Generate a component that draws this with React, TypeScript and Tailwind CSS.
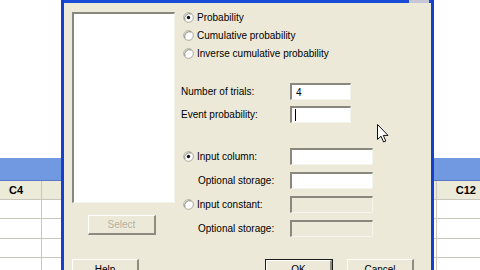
import React from 'react'

function Radio({ checked = false }: { checked?: boolean }) {
  return (
    <svg width="11" height="11" viewBox="0 0 11 11" className="shrink-0">
      <circle cx="5.5" cy="5.5" r="4.8" fill="#ffffff" stroke="#a9a798" strokeWidth="1" />
      <path d="M2 8.2 A4.8 4.8 0 0 1 8.2 2" fill="none" stroke="#8d8b7f" strokeWidth="1" />
      {checked && <circle cx="5.5" cy="5.5" r="1.7" fill="#111111" />}
    </svg>
  )
}

function Field({ wide = false, disabled = false, children }: { wide?: boolean; disabled?: boolean; children?: React.ReactNode }) {
  return (
    <div
      className={`flex h-[17px] items-center border-t-2 border-l-2 border-b border-r border-t-[#8a887c] border-l-[#8a887c] border-b-[#f4f3ec] border-r-[#f4f3ec] pl-[2px] ${
        wide ? 'w-[83px]' : 'w-[61px]'
      } ${disabled ? 'bg-[#ece9d8]' : 'bg-white'}`}
    >
      {children}
    </div>
  )
}

function Button({ label, disabled = false, isDefault = false, width }: { label: string; disabled?: boolean; isDefault?: boolean; width: string }) {
  return (
    <div
      className={`flex h-[22px] items-center justify-center bg-[#ece9d8] ${width} ${
        isDefault ? 'border border-[#1c1c1c]' : ''
      }`}
    >
      <div className="flex h-full w-full items-center justify-center border-t border-l border-b-2 border-r-2 border-t-white border-l-white border-b-[#8e8c80] border-r-[#8e8c80]">
        <span className={disabled ? 'text-[#b3b0a2]' : 'text-black'}>{label}</span>
      </div>
    </div>
  )
}

export default function App() {
  const rowLine = 'border-b border-[#c9c7bb]'
  return (
    <div className="relative h-[270px] w-[480px] overflow-hidden bg-white text-[10px] font-['Liberation_Sans',Arial,sans-serif] text-black">
      {/* Worksheet behind the dialog */}
      <div className="flex flex-col">
        <div className="h-[158px] bg-white" />
        <div className="h-[23px] border-b border-[#5878c4] bg-[#7099e2]" />
        <div className={`flex h-[19px] bg-[#ecead9] text-[11px] font-bold ${rowLine}`}>
          <div className="flex w-[42px] items-center border-r border-[#c9c7bb] pl-[9px]">C4</div>
          <div className="w-[395px] border-r border-[#c9c7bb]" />
          <div className="flex flex-1 items-center justify-end pr-[4px]">C12</div>
        </div>
        {['h-[19px]', 'h-[20px]', 'h-[19px]', 'h-[20px]'].map((h, i) => (
          <div key={i} className={`flex ${h} ${rowLine}`}>
            <div className="w-[42px] border-r border-[#c9c7bb]" />
            <div className="w-[395px] border-r border-[#c9c7bb]" />
            <div className="flex-1" />
          </div>
        ))}
      </div>

      {/* Binomial distribution dialog */}
      <div className="absolute left-[61px] top-0 flex h-[300px] w-[373px] flex-col border-x-[3px] border-[#1340cc] bg-[#ece9d8]">
        <div className="flex h-[3px] justify-end bg-[#1a4bd6]">
          <div className="mr-[2px] w-[20px] bg-[#c8c6d6]" />
        </div>
        <div className="flex h-[256px]">
          {/* variable list */}
          <div className="ml-[8px] flex w-[103px] flex-col">
            <div className="mt-[9px] h-[191px] border-t-2 border-l-2 border-b border-r border-t-[#8a887c] border-l-[#8a887c] border-b-[#f4f3ec] border-r-[#f4f3ec] bg-white" />
            <div className="ml-[16px] mt-[12px]">
              <Button label="Select" disabled width="w-[68px] !h-[20px]" />
            </div>
          </div>

          {/* options */}
          <div className="ml-[6px] flex flex-col pt-[5px]">
            <div className="flex h-[18px] items-center gap-[3px] pl-[2px]">
              <Radio checked />
              <span>Probability</span>
            </div>
            <div className="flex h-[18px] items-center gap-[3px] pl-[2px]">
              <Radio />
              <span>Cumulative probability</span>
            </div>
            <div className="flex h-[19px] items-center gap-[3px] pl-[2px]">
              <Radio />
              <span>Inverse cumulative probability</span>
            </div>

            <div className="mt-[20px] flex h-[17px] items-center">
              <span className="w-[109px]">Number of trials:</span>
              <Field>
                <span className="pl-[2px]">4</span>
              </Field>
            </div>
            <div className="mt-[6px] flex h-[17px] items-center">
              <span className="w-[109px]">Event probability:</span>
              <Field>
                <span className="ml-[1px] h-[12px] w-px bg-black" />
              </Field>
            </div>

            <div className="mt-[25px] flex flex-col gap-[7px]">
              <div className="flex h-[17px] items-center">
                <div className="flex w-[109px] items-center gap-[3px] pl-[2px]">
                  <Radio checked />
                  <span>Input column:</span>
                </div>
                <Field wide />
              </div>
              <div className="flex h-[17px] items-center">
                <span className="w-[109px] pl-[17px]">Optional storage:</span>
                <Field wide />
              </div>
              <div className="flex h-[17px] items-center">
                <div className="flex w-[109px] items-center gap-[3px] pl-[2px]">
                  <Radio />
                  <span>Input constant:</span>
                </div>
                <Field wide disabled />
              </div>
              <div className="flex h-[17px] items-center">
                <span className="w-[109px] pl-[17px]">Optional storage:</span>
                <Field wide disabled />
              </div>
            </div>
          </div>
        </div>

        {/* bottom buttons */}
        <div className="flex">
          <div className="ml-[8px]">
            <Button label="Help" width="w-[67px]" />
          </div>
          <div className="ml-[126px]">
            <Button label="OK" isDefault width="w-[68px]" />
          </div>
          <div className="ml-[14px]">
            <Button label="Cancel" width="w-[67px]" />
          </div>
        </div>
      </div>

      {/* mouse pointer */}
      <svg className="absolute left-[377px] top-[124px]" width="12" height="19" viewBox="0 0 12 19">
        <path d="M0.5 0.5 L0.5 15.5 L4 12.2 L6.6 18 L8.8 17 L6.3 11.4 L11 11.4 Z" fill="#ffffff" stroke="#111111" strokeWidth="1" strokeLinejoin="round" />
      </svg>
    </div>
  )
}
